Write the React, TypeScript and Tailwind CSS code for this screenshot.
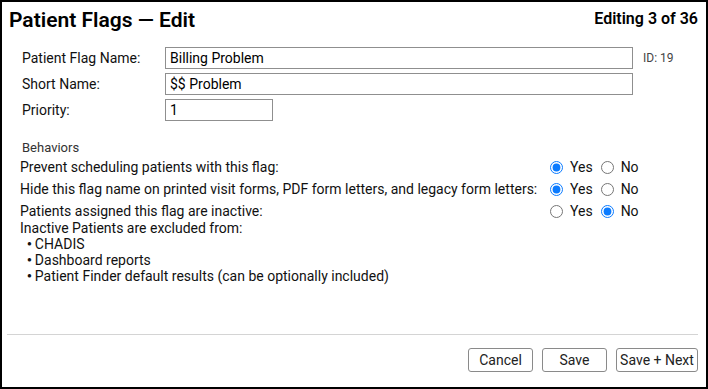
import React from "react";

const behaviors = [
  { label: "Prevent scheduling patients with this flag:", yes: true },
  {
    label:
      "Hide this flag name on printed visit forms, PDF form letters, and legacy form letters:",
    yes: true,
  },
  { label: "Patients assigned this flag are inactive:", yes: false },
];

const excluded = [
  "CHADIS",
  "Dashboard reports",
  "Patient Finder default results (can be optionally included)",
];

function Field({
  label,
  value,
  width,
  extra,
}: {
  label: string;
  value: string;
  width: string;
  extra?: React.ReactNode;
}) {
  return (
    <div className="flex items-center h-[22px]">
      <label className="w-[143px] shrink-0 text-[14px] text-[#111]">{label}</label>
      <input
        readOnly
        value={value}
        className={`${width} h-[22px] border border-[#8f8f8f] px-[4px] text-[14px] text-black outline-none`}
      />
      {extra}
    </div>
  );
}

function Radio({ checked, name }: { checked: boolean; name: string }) {
  return (
    <input
      type="radio"
      name={name}
      checked={checked}
      readOnly
      className="m-0 w-[13px] h-[13px] accent-[#0b7bff]"
    />
  );
}

export default function App() {
  return (
    <div className="w-[708px] h-[389px] border-2 border-black bg-white flex flex-col font-['Roboto',sans-serif] text-[#111]">
      <div className="flex justify-between items-start pl-[7px] pr-[8px]">
        <h1 className="text-[21px] leading-[24px] font-semibold text-black mt-[6px]">
          Patient Flags — Edit
        </h1>
        <div className="text-[16px] leading-[20px] font-semibold text-black mt-[7px]">
          Editing 3 of 36
        </div>
      </div>

      <div className="flex flex-col gap-[4px] pl-[20px] mt-[15px]">
        <Field
          label="Patient Flag Name:"
          value="Billing Problem"
          width="w-[468px]"
          extra={<span className="ml-[10px] text-[12px] text-[#444]">ID: 19</span>}
        />
        <Field label="Short Name:" value="$$ Problem" width="w-[468px]" />
        <Field label="Priority:" value="1" width="w-[108px]" />
      </div>

      <div className="pl-[18px] mt-[19px] text-[14px] leading-[16px]">
        <div className="ml-[2px] text-[13px] text-[#333]">Behaviors</div>
        {behaviors.map((b, i) => (
          <div key={i} className="flex items-center h-[22px]">
            <span className="w-[530px] shrink-0 whitespace-nowrap">{b.label}</span>
            <label className="flex items-center gap-[7px]">
              <Radio checked={b.yes} name={`b${i}`} />
              <span>Yes</span>
            </label>
            <label className="flex items-center gap-[7px] ml-[8px]">
              <Radio checked={!b.yes} name={`b${i}`} />
              <span>No</span>
            </label>
          </div>
        ))}
        <div className="-mt-[2px]">Inactive Patients are excluded from:</div>
        <ul className="pl-[7px]">
          {excluded.map((item) => (
            <li key={item} className="flex items-center">
              <span className="text-[8px] leading-[16px] mr-[3px]">●</span>
              <span>{item}</span>
            </li>
          ))}
        </ul>
      </div>

      <div className="mt-auto ml-[5px] mr-[8px] border-t border-[#d4d4d4]" />
      <div className="flex justify-end gap-[9px] pr-[8px] pt-[13px] pb-[15px]">
        <button className="w-[65px] h-[24px] border border-[#8a8a8a] rounded-[3px] bg-white text-[14px] text-[#222]">
          Cancel
        </button>
        <button className="w-[65px] h-[24px] border border-[#8a8a8a] rounded-[3px] bg-white text-[14px] text-[#222]">
          Save
        </button>
        <button className="w-[82px] h-[24px] border border-[#8a8a8a] rounded-[3px] bg-white text-[14px] text-[#222]">
          Save + Next
        </button>
      </div>
    </div>
  );
}
